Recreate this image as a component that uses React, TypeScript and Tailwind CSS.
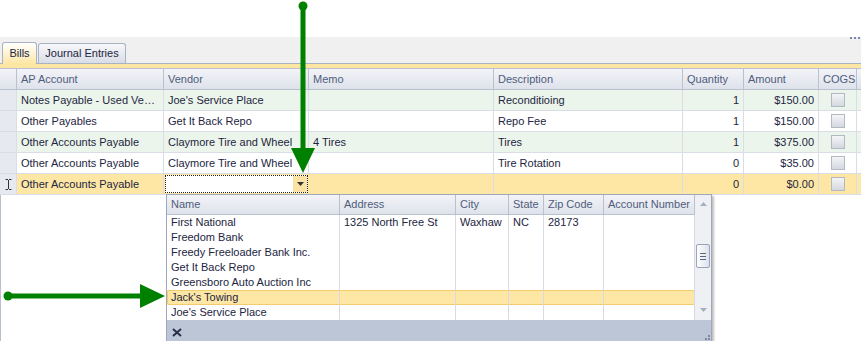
import React from 'react'

type Row = { ap: string; vendor: string; memo: string; desc: string; qty: string; amt: string }

const rows: Row[] = [
    { ap: 'Notes Payable - Used Vehicles', vendor: "Joe's Service Place", memo: '', desc: 'Reconditioing', qty: '1', amt: '$150.00' },
    { ap: 'Other Payables', vendor: 'Get It Back Repo', memo: '', desc: 'Repo Fee', qty: '1', amt: '$150.00' },
    { ap: 'Other Accounts Payable', vendor: 'Claymore Tire and Wheel', memo: '4 Tires', desc: 'Tires', qty: '1', amt: '$375.00' },
    { ap: 'Other Accounts Payable', vendor: 'Claymore Tire and Wheel', memo: '', desc: 'Tire Rotation', qty: '0', amt: '$35.00' },
]

const vendors = [
    { name: 'First National', address: '1325 North Free St', city: 'Waxhaw', state: 'NC', zip: '28173' },
    { name: 'Freedom Bank' },
    { name: 'Freedy Freeloader Bank Inc.' },
    { name: 'Get It Back Repo' },
    { name: 'Greensboro Auto Auction Inc' },
    { name: "Jack's Towing", active: true },
    { name: "Joe's Service Place" },
]

const gridCols = 'grid grid-cols-[17px_147px_145px_185px_189px_61px_75px_38px_4px]'
const popCols = 'grid grid-cols-[173px_116px_53px_35px_60px_91px]'

const Check = () => (
    <div className="w-[14px] h-[14px] border border-[#b4b8c0] bg-gradient-to-b from-[#f4f5f8] to-[#d4d8e0]" />
)

const Cell = ({ children, right, className = '' }: { children?: React.ReactNode; right?: boolean; className?: string }) => (
    <div className={`h-[21px] leading-[20px] border-r border-b border-[#d9dde6] px-[4px] truncate ${right ? 'text-right' : ''} ${className}`}>
        {children}
    </div>
)

const HeadCell = ({ children }: { children?: React.ReactNode }) => (
    <div className="h-[21px] leading-[20px] border-r border-b border-[#b9c1d1] px-[4px] whitespace-nowrap overflow-hidden text-[#4f5d7c]">{children}</div>
)

export default function App() {
    return (
        <div className="relative w-[861px] h-[341px] overflow-hidden bg-white text-[11px] text-[#1c2541]" style={{ fontFamily: '"Liberation Sans", Arial, sans-serif' }}>
            <div className="h-[37px]" />

            {/* tab strip */}
            <div className="relative h-[27px] bg-[#f0f0f0] border-b border-[#aab3c5] flex items-end pl-[2px] gap-[1px]">
                <div className="h-[22px] w-[35px] -mb-px rounded-t-[3px] border border-b-0 border-[#a9b2c4] bg-gradient-to-b from-white to-[#fde6a2] flex items-center justify-center text-[#1c2541]">
                    Bills
                </div>
                <div className="h-[20px] w-[88px] rounded-t-[3px] border border-b-0 border-[#a9b2c4] bg-gradient-to-b from-[#f7f8fa] to-[#d9dde6] flex items-center justify-center text-[#1c2541]">
                    Journal Entries
                </div>
                <div className="absolute right-[1px] top-0 flex gap-[2px]">
                    <span className="w-[2px] h-[2px] bg-[#7a88a6]" />
                    <span className="w-[2px] h-[2px] bg-[#7a88a6]" />
                    <span className="w-[2px] h-[2px] bg-[#7a88a6]" />
                </div>
            </div>
            <div className="h-[4px] bg-[#fde6a2]" />

            {/* grid */}
            <div className="border-t border-[#b9c1d1]">
                <div className={`${gridCols} bg-gradient-to-b from-[#f3f4f8] to-[#dde1ea]`}>
                    <HeadCell />
                    <HeadCell>AP Account</HeadCell>
                    <HeadCell>Vendor</HeadCell>
                    <HeadCell>Memo</HeadCell>
                    <HeadCell>Description</HeadCell>
                    <HeadCell>Quantity</HeadCell>
                    <HeadCell>Amount</HeadCell>
                    <HeadCell>COGS</HeadCell>
                    <HeadCell />
                </div>
                {rows.map((r, i) => (
                    <div key={i} className={`${gridCols} ${i % 2 === 0 ? 'bg-[#ecf5eb]' : 'bg-white'}`}>
                        <Cell className="bg-[#e6e9ef]" />
                        <Cell>{r.ap}</Cell>
                        <Cell>{r.vendor}</Cell>
                        <Cell>{r.memo}</Cell>
                        <Cell>{r.desc}</Cell>
                        <Cell right>{r.qty}</Cell>
                        <Cell right>{r.amt}</Cell>
                        <Cell className="flex items-center justify-center"><Check /></Cell>
                        <Cell />
                    </div>
                ))}
                <div className={`${gridCols} bg-[#fee7a5]`}>
                    <Cell className="bg-[#e6e9ef] flex items-center justify-center">
                        <svg width="7" height="11" viewBox="0 0 7 11">
                            <path d="M0.5 0.5h2.5M4 0.5h2.5M3.5 1v9M0.5 10.5h2.5M4 10.5h2.5" stroke="#333" strokeWidth="1" fill="none" />
                        </svg>
                    </Cell>
                    <Cell>Other Accounts Payable</Cell>
                    <div className="h-[21px] border-b border-[#d9dde6] p-[1px]">
                        <div className="h-full bg-white border border-dotted border-[#222] flex justify-end">
                            <div className="w-[14px] h-full bg-[#fbe3a4] flex items-center justify-center">
                                <svg width="7" height="4" viewBox="0 0 7 4"><path d="M0 0h7L3.5 4z" fill="#333" /></svg>
                            </div>
                        </div>
                    </div>
                    <Cell />
                    <Cell />
                    <Cell right>0</Cell>
                    <Cell right>$0.00</Cell>
                    <Cell className="flex items-center justify-center"><Check /></Cell>
                    <Cell />
                </div>
                <div className="h-[150px] border-l border-[#b9c1d1]" />
            </div>

            {/* vendor lookup popup */}
            <div className="absolute left-[166px] top-[194px] w-[546px] border border-[#9ea8bb] bg-white shadow-[2px_2px_2px_rgba(0,0,0,0.25)]">
                <div className="flex">
                    <div className="w-[528px]">
                        <div className={`${popCols} bg-gradient-to-b from-[#f3f4f8] to-[#dde1ea] text-[#4f5d7c]`}>
                            {['Name', 'Address', 'City', 'State', 'Zip Code', 'Account Number'].map((h) => (
                                <div key={h} className="h-[20px] leading-[19px] px-[4px] border-r border-b border-[#b9c1d1] whitespace-nowrap overflow-hidden">{h}</div>
                            ))}
                        </div>
                        {vendors.map((v, i) => (
                            <div key={i} className={`${popCols} ${v.active ? 'bg-[#fee7a5] shadow-[inset_0_0_0_1px_#f2cc6c] rounded-[2px]' : ''}`}>
                                {[v.name, v.address, v.city, v.state, v.zip, ''].map((c, j) => (
                                    <div key={j} className="h-[15px] leading-[15px] px-[4px] border-r border-[#d6dae3] whitespace-nowrap overflow-hidden">{c}</div>
                                ))}
                            </div>
                        ))}
                    </div>
                    <div className="w-[16px] bg-[#eef0f4] flex flex-col items-center">
                        <svg className="mt-[7px]" width="7" height="4" viewBox="0 0 7 4"><path d="M0 4h7L3.5 0z" fill="#a7afbe" /></svg>
                        <div className="mt-[38px] w-[14px] h-[24px] rounded-[2px] border border-[#9aa5ba] bg-gradient-to-r from-white to-[#dde1e9] flex flex-col items-center justify-center gap-[2px]">
                            <span className="w-[6px] h-[1px] bg-[#5b6680]" />
                            <span className="w-[6px] h-[1px] bg-[#5b6680]" />
                            <span className="w-[6px] h-[1px] bg-[#5b6680]" />
                        </div>
                        <svg className="mt-[40px]" width="7" height="4" viewBox="0 0 7 4"><path d="M0 0h7L3.5 4z" fill="#a7afbe" /></svg>
                    </div>
                </div>
                <div className="relative h-[24px] bg-[#bcc6d6] flex items-center pl-[5px]">
                    <svg width="10" height="9" viewBox="0 0 10 9"><path d="M1 1l8 7M9 1l-8 7" stroke="#26304a" strokeWidth="2" /></svg>
                    <div className="absolute right-[1px] bottom-[1px] grid grid-cols-3 gap-[1px]">
                        <span /><span /><span className="w-[2px] h-[2px] bg-[#7d89a2]" />
                        <span /><span className="w-[2px] h-[2px] bg-[#7d89a2]" /><span className="w-[2px] h-[2px] bg-[#7d89a2]" />
                        <span className="w-[2px] h-[2px] bg-[#7d89a2]" /><span className="w-[2px] h-[2px] bg-[#7d89a2]" /><span className="w-[2px] h-[2px] bg-[#7d89a2]" />
                    </div>
                </div>
            </div>

            {/* annotation arrows */}
            <svg className="absolute inset-0 pointer-events-none" width="861" height="341">
                <circle cx="303" cy="6" r="4.5" fill="#008000" />
                <line x1="303" y1="6" x2="303" y2="150" stroke="#008000" strokeWidth="5" />
                <polygon points="291,148 315,148 303,173" fill="#008000" />
                <circle cx="8" cy="296" r="4.5" fill="#008000" />
                <line x1="8" y1="296" x2="142" y2="296" stroke="#008000" strokeWidth="5" />
                <polygon points="140,284 140,308 165,296" fill="#008000" />
            </svg>
        </div>
    )
}
